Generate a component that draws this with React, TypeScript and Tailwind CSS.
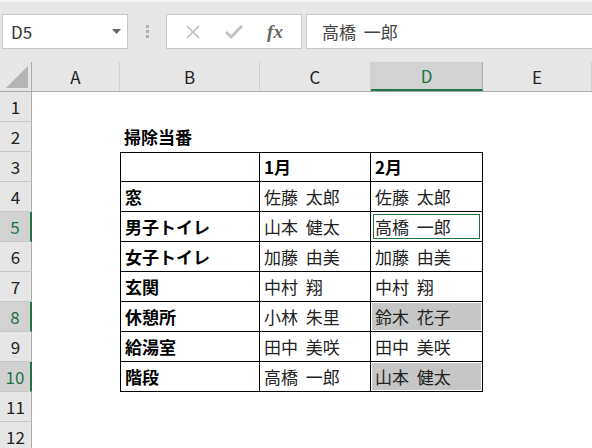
import React from "react";

const FONT = "[font-family:'Noto_Sans_CJK_JP','Noto_Sans',sans-serif]";

const COLS = [
  { key: "A", w: "w-[88px]" },
  { key: "B", w: "w-[140px]" },
  { key: "C", w: "w-[111px]" },
  { key: "D", w: "w-[112px]" },
  { key: "E", w: "w-[109px]" },
];

// rows 3..10 of the table (B, C, D)
const TABLE: Record<number, [string, string, string]> = {
  3: ["", "1月", "2月"],
  4: ["窓", "佐藤 太郎", "佐藤 太郎"],
  5: ["男子トイレ", "山本 健太", "高橋 一郎"],
  6: ["女子トイレ", "加藤 由美", "加藤 由美"],
  7: ["玄関", "中村 翔", "中村 翔"],
  8: ["休憩所", "小林 朱里", "鈴木 花子"],
  9: ["給湯室", "田中 美咲", "田中 美咲"],
  10: ["階段", "高橋 一郎", "山本 健太"],
};

const SELECTED_ROWS = [5, 8, 10];

const FormulaBar: React.FC = () => (
  <div className="h-[62px] bg-[#e6e6e6] border-t-2 border-[#f3f3f3] flex items-start pt-[12px] pl-[2px] pr-0">
    {/* Name box */}
    <div className="w-[126px] h-[35px] bg-white border border-[#c6c6c6] flex items-center justify-between pl-[8px] pr-[6px]">
      <span className="text-[17px] text-[#333] leading-none">D5</span>
      <svg width="9" height="5" viewBox="0 0 9 5">
        <path d="M0 0h9L4.5 5z" fill="#666" />
      </svg>
    </div>
    {/* Separator dots */}
    <div className="w-[38px] h-[35px] flex flex-col items-center justify-center gap-[2px]">
      <span className="w-[3px] h-[3px] bg-[#b0b0b0]" />
      <span className="w-[3px] h-[3px] bg-[#b0b0b0]" />
      <span className="w-[3px] h-[3px] bg-[#b0b0b0]" />
    </div>
    {/* Buttons */}
    <div className="w-[136px] h-[35px] bg-white border border-[#c6c6c6] flex items-center justify-around px-[6px]">
      <svg width="16" height="16" viewBox="0 0 16 16">
        <path d="M2 2l12 12M14 2L2 14" stroke="#bdbdbd" strokeWidth="1.6" fill="none" />
      </svg>
      <svg width="18" height="14" viewBox="0 0 18 14">
        <path d="M1 7l5 5L17 1" stroke="#c2c2c2" strokeWidth="3" fill="none" />
      </svg>
      <span className="[font-family:'Liberation_Serif',serif] italic font-bold text-[19px] text-[#666] leading-none">
        fx
      </span>
    </div>
    {/* Formula input */}
    <div className="flex-1 ml-[4px] h-[35px] bg-white border border-[#c6c6c6] border-r-0 flex items-center pl-[15px]">
      <span className="text-[17px] text-[#444] [word-spacing:4px]">高橋 一郎</span>
    </div>
  </div>
);

const ColumnHeader: React.FC = () => (
  <div className="h-[30px] flex bg-[#e6e6e6] border-b border-[#ababab]">
    <div className="w-[32px] h-full border-r border-[#ababab] flex items-end justify-end pr-[3px] pb-[3px]">
      <svg width="22" height="22" viewBox="0 0 22 22">
        <path d="M22 0V22H0z" fill="#b4b4b4" />
      </svg>
    </div>
    {COLS.map((c) =>
      c.key === "D" ? (
        <div
          key={c.key}
          className={`${c.w} h-full bg-[#d2d2d2] border-r border-[#ababab] border-b-2 border-b-[#217346] flex items-center justify-center text-[17px] text-[#217346]`}
        >
          {c.key}
        </div>
      ) : (
        <div
          key={c.key}
          className={`${c.w} h-full border-r border-[#d0d0d0] flex items-center justify-center text-[17px] text-[#222]`}
        >
          {c.key}
        </div>
      )
    )}
  </div>
);

const Cell: React.FC<{
  w: string;
  border?: string;
  bold?: boolean;
  active?: boolean;
  selected?: boolean;
  children?: React.ReactNode;
}> = ({ w, border = "", bold, active, selected, children }) => (
  <div className={`${w} h-full relative flex items-center ${border}`}>
    {selected && <div className="absolute inset-[1px] bg-[#c6c6c6]" />}
    {active && <div className="absolute inset-[2px] border-[1.5px] border-[#217346]" />}
    <span
      className={`relative pl-[4px] text-[17px] whitespace-nowrap [word-spacing:4px] ${
        bold ? "font-bold text-black" : "text-[#222]"
      }`}
    >
      {children}
    </span>
  </div>
);

const Row: React.FC<{ n: number }> = ({ n }) => {
  const sel = SELECTED_ROWS.includes(n);
  const t = TABLE[n];
  const top = n === 3 ? " border-t" : "";
  return (
    <div className="h-[30px] flex">
      <div
        className={`w-[32px] h-full flex items-center justify-center text-[17px] border-b border-[#c8c8c8] ${
          sel
            ? "bg-[#d2d2d2] text-[#217346] border-r-2 border-r-[#217346]"
            : "bg-[#e6e6e6] text-[#222] border-r border-r-[#ababab]"
        }`}
      >
        {n}
      </div>
      <Cell w="w-[88px]" />
      {t ? (
        <>
          <Cell w="w-[140px]" border={`border-l border-r border-b border-black${top}`} bold>
            {t[0]}
          </Cell>
          <Cell w="w-[111px]" border={`border-r border-b border-black${top}`} bold={n === 3}>
            {t[1]}
          </Cell>
          <Cell
            w="w-[112px]"
            border={`border-r border-b border-black${top}`}
            bold={n === 3}
            active={n === 5}
            selected={n === 8 || n === 10}
          >
            {t[2]}
          </Cell>
        </>
      ) : (
        <>
          <Cell w="w-[140px]" bold>
            {n === 2 ? "掃除当番" : ""}
          </Cell>
          <Cell w="w-[111px]" />
          <Cell w="w-[112px]" />
        </>
      )}
      <Cell w="w-[109px]" />
    </div>
  );
};

export default function App() {
  const rows = Array.from({ length: 12 }, (_, i) => i + 1);
  return (
    <div className={`w-[592px] h-[448px] overflow-hidden bg-white ${FONT}`}>
      <FormulaBar />
      <ColumnHeader />
      {rows.map((n) => (
        <Row key={n} n={n} />
      ))}
    </div>
  );
}
